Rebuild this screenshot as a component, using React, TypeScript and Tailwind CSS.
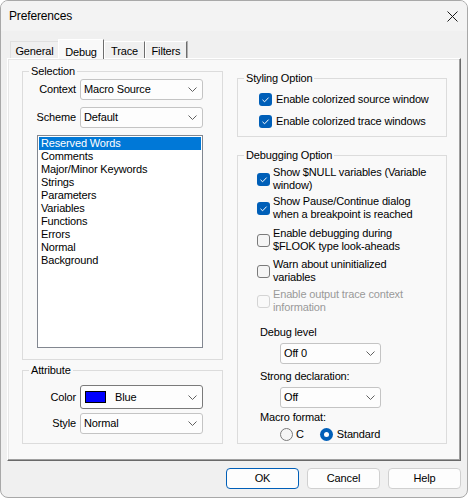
import React from "react";

const Chevron = () => (
  <svg width="9" height="5" viewBox="0 0 9 5" className="shrink-0">
    <path d="M0.5 0.5 L4.5 4.5 L8.5 0.5" fill="none" stroke="#606060" strokeWidth="1" />
  </svg>
);

function Combo({ children, cls }: { children: React.ReactNode; cls: string }) {
  return (
    <div className={"flex items-center justify-between bg-[#fdfdfd] border rounded-[3px] pr-[5px] " + cls}>
      <div className="flex items-center">{children}</div>
      <Chevron />
    </div>
  );
}

function Check({ checked, disabled }: { checked?: boolean; disabled?: boolean }) {
  if (checked) {
    return (
      <div className="w-[13px] h-[13px] shrink-0 rounded-[3px] bg-[#005fb8] flex items-center justify-center">
        <svg width="13" height="13" viewBox="0 0 13 13">
          <path d="M3.5 6.8 L5.6 8.8 L9.6 4.6" fill="none" stroke="#ffffff" strokeWidth="1" />
        </svg>
      </div>
    );
  }
  return (
    <div
      className={
        disabled
          ? "w-[13px] h-[13px] shrink-0 rounded-[3px] border border-[#d4d4d4] bg-[#f9f9f9]"
          : "w-[13px] h-[13px] shrink-0 rounded-[3px] border border-[#7a7a7a] bg-[#f5f5f5]"
      }
    />
  );
}

function Group({ label, cls, children }: { label: string; cls: string; children: React.ReactNode }) {
  return (
    <fieldset className={"border border-[#dcdcdc] " + cls}>
      <legend className="ml-[6px] px-[2px] leading-[16px]">{label}</legend>
      {children}
    </fieldset>
  );
}

const items = [
  "Reserved Words",
  "Comments",
  "Major/Minor Keywords",
  "Strings",
  "Parameters",
  "Variables",
  "Functions",
  "Errors",
  "Normal",
  "Background",
];

function DebugItem({ mt, checked, disabled, l1, l2 }: { mt: string; checked?: boolean; disabled?: boolean; l1: string; l2: string }) {
  return (
    <div className={"flex items-center gap-[3px] pl-[19px] " + mt}>
      <Check checked={checked} disabled={disabled} />
      <div className={disabled ? "whitespace-nowrap text-[#9a9a9a]" : "whitespace-nowrap"}>
        {l1}
        <br />
        {l2}
      </div>
    </div>
  );
}

export default function App() {
  return (
    <div className="w-[468px] h-[498px] bg-[#f0f0f0] border border-[#a8a8a8] rounded-[8px] overflow-hidden flex flex-col font-['Liberation_Sans',Arial,sans-serif] text-[11px] leading-[13px] text-black tracking-[-0.15px]">
      {/* title bar */}
      <div className="h-[30px] shrink-0 bg-[#f3f3f3] flex items-center justify-between pl-[8px] pr-[9px]">
        <span className="text-[12px]">Preferences</span>
        <svg width="11" height="11" viewBox="0 0 11 11">
          <path d="M0.5 0.5 L10.5 10.5 M10.5 0.5 L0.5 10.5" fill="none" stroke="#1a1a1a" strokeWidth="1" />
        </svg>
      </div>

      {/* tabs */}
      <div className="h-[27px] shrink-0 flex items-end pl-[9px]">
        <div className="w-[48px] h-[17px] flex justify-center pt-[3px] border-l border-t border-[#e0e0e0]">General</div>
        <div className="relative z-10 -mb-px w-[46px] h-[20px] flex justify-center pt-[6px] bg-[#f9f9f9] border-l border-t border-white border-r border-r-[#6d6d6d]">
          Debug
        </div>
        <div className="w-[41px] h-[17px] flex justify-center pt-[3px] border-l border-t border-white border-r border-r-[#6d6d6d] shadow-[1px_0_0_#b0b0b0]">
          Trace
        </div>
        <div className="w-[42px] h-[17px] flex justify-center pt-[3px] border-l border-t border-white border-r border-r-[#6d6d6d] shadow-[1px_0_0_#b0b0b0]">
          Filters
        </div>
      </div>

      {/* panel */}
      <div className="ml-[6px] w-[454px] h-[403px] shrink-0 bg-[#f9f9f9] border-l border-t border-white border-r border-b border-r-[#696969] border-b-[#696969] shadow-[inset_-1px_-1px_0_#a0a0a0,inset_1px_1px_0_#e6e6e6] flex pl-[14px] gap-[14px]">
        {/* left column */}
        <div className="w-[201px] flex flex-col pt-[4px]">
          <Group label="Selection" cls="h-[297px]">
            <div className="flex items-center h-[21px]">
              <div className="w-[53px] text-right">Context</div>
              <Combo cls="ml-[4px] w-[123px] h-[21px] border-[#c4c4c4] pl-[3px]">Macro Source</Combo>
            </div>
            <div className="flex items-center h-[21px] mt-[7px]">
              <div className="w-[53px] text-right">Scheme</div>
              <Combo cls="ml-[4px] w-[123px] h-[21px] border-[#c4c4c4] pl-[3px]">Default</Combo>
            </div>
            <div className="ml-[14px] mt-[7px] w-[166px] h-[213px] bg-white border border-[#828790] p-px">
              {items.map((it, i) => (
                <div
                  key={it}
                  className={i === 0 ? "h-[13px] leading-[13px] pl-[2px] bg-[#0078d7] text-white" : "h-[13px] leading-[13px] pl-[2px]"}
                >
                  {it}
                </div>
              ))}
            </div>
          </Group>
          <Group label="Attribute" cls="mt-[2px] h-[82px]">
            <div className="flex items-center h-[24px] mt-[7px]">
              <div className="w-[53px] text-right">Color</div>
              <Combo cls="ml-[4px] w-[123px] h-[24px] border-[#7a7a7a] pl-[4px]">
                <div className="w-[21px] h-[12px] border border-black bg-[#0000ff]" />
                <span className="ml-[9px]">Blue</span>
              </Combo>
            </div>
            <div className="flex items-center h-[21px] mt-[4px]">
              <div className="w-[53px] text-right">Style</div>
              <Combo cls="ml-[4px] w-[123px] h-[21px] border-[#c4c4c4] pl-[3px]">Normal</Combo>
            </div>
          </Group>
        </div>

        {/* right column */}
        <div className="w-[210px] flex flex-col pt-[11px]">
          <Group label="Styling Option" cls="h-[67px]">
            <div className="flex items-center h-[16px] mt-[5px] pl-[21px] gap-[4px]">
              <Check checked />
              <span className="whitespace-nowrap">Enable colorized source window</span>
            </div>
            <div className="flex items-center h-[16px] mt-[6px] pl-[21px] gap-[4px]">
              <Check checked />
              <span className="whitespace-nowrap">Enable colorized trace windows</span>
            </div>
          </Group>
          <Group label="Debugging Option" cls="mt-[10px] h-[297px]">
            <DebugItem mt="mt-[3px]" checked l1="Show $NULL variables (Variable" l2="window)" />
            <DebugItem mt="mt-[3px]" checked l1="Show Pause/Continue dialog" l2="when a breakpoint is reached" />
            <DebugItem mt="mt-[6px]" l1="Enable debugging during" l2="$FLOOK type look-aheads" />
            <DebugItem mt="mt-[5px]" l1="Warn about uninitialized" l2="variables" />
            <DebugItem mt="mt-[4px]" disabled l1="Enable output trace context" l2="information" />
            <div className="pl-[22px] mt-[12px]">Debug level</div>
            <Combo cls="ml-[42px] mt-[4px] w-[101px] h-[21px] border-[#c4c4c4] pl-[3px]">Off 0</Combo>
            <div className="pl-[22px] mt-[6px]">Strong declaration:</div>
            <Combo cls="ml-[42px] mt-[4px] w-[101px] h-[21px] border-[#c4c4c4] pl-[3px]">Off</Combo>
            <div className="pl-[22px] mt-[3px]">Macro format:</div>
            <div className="ml-[42px] mt-[4px] flex items-center h-[13px]">
              <div className="w-[13px] h-[13px] rounded-full border border-[#7a7a7a] bg-[#f5f5f5]" />
              <span className="ml-[3px]">C</span>
              <div className="ml-[16px] w-[13px] h-[13px] rounded-full bg-[#005fb8] flex items-center justify-center">
                <div className="w-[5px] h-[5px] rounded-full bg-white" />
              </div>
              <span className="ml-[4px]">Standard</span>
            </div>
          </Group>
        </div>
      </div>

      {/* buttons */}
      <div className="mt-[7px] flex justify-end gap-[8px] pr-[6px]">
        <div className="w-[73px] h-[21px] rounded-[4px] border border-[#005fb8] bg-[#fdfdfd] flex items-center justify-center">OK</div>
        <div className="w-[73px] h-[21px] rounded-[4px] border border-[#d0d0d0] bg-[#fdfdfd] flex items-center justify-center">Cancel</div>
        <div className="w-[73px] h-[21px] rounded-[4px] border border-[#d0d0d0] bg-[#fdfdfd] flex items-center justify-center">Help</div>
      </div>
    </div>
  );
}
